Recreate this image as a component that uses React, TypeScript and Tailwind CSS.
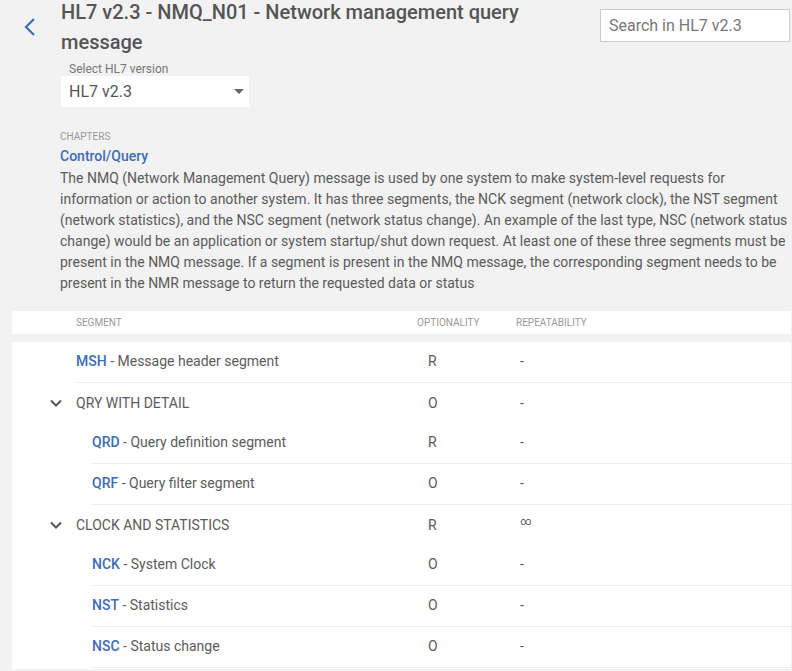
import React from "react";

type Row =
  | { kind: "seg"; code: string; name: string; opt: string; rep: string; depth: number }
  | { kind: "group"; name: string; opt: string; rep: string };

const rows: Row[] = [
  { kind: "seg", code: "MSH", name: "Message header segment", opt: "R", rep: "-", depth: 0 },
  { kind: "group", name: "QRY WITH DETAIL", opt: "O", rep: "-" },
  { kind: "seg", code: "QRD", name: "Query definition segment", opt: "R", rep: "-", depth: 1 },
  { kind: "seg", code: "QRF", name: "Query filter segment", opt: "O", rep: "-", depth: 1 },
  { kind: "group", name: "CLOCK AND STATISTICS", opt: "R", rep: "∞" },
  { kind: "seg", code: "NCK", name: "System Clock", opt: "O", rep: "-", depth: 1 },
  { kind: "seg", code: "NST", name: "Statistics", opt: "O", rep: "-", depth: 1 },
  { kind: "seg", code: "NSC", name: "Status change", opt: "O", rep: "-", depth: 1 },
];

function Cols({ opt, rep }: { opt: string; rep: string }) {
  return (
    <>
      <div className="w-[92px] shrink-0">{opt}</div>
      <div className={`w-[271px] shrink-0 ${rep === "∞" ? "text-[11px] -mt-[5px]" : ""}`}>{rep}</div>
    </>
  );
}

export default function App() {
  return (
    <div
      className="min-h-[671px] w-[792px] bg-[#f2f2f2] text-[#5b5b5b]"
      style={{ fontFamily: "Roboto, 'Liberation Sans', sans-serif" }}
    >
      <div className="flex">
        <div className="w-[61px] shrink-0 pt-[17px] pl-[23px]">
          <svg width="14" height="20" viewBox="0 0 14 20" fill="none">
            <path d="M11 2 L3 10 L11 18" stroke="#3d6db4" strokeWidth="2.2" />
          </svg>
        </div>
        <div className="w-[530px] shrink-0">
          <h1 className="-mt-[3px] text-[20px] leading-[30px] font-medium text-[#555]">
            HL7 v2.3 - NMQ_N01 - Network management query message
          </h1>
          <div className="mt-[5px] pl-[8px] text-[12px] leading-[14px] text-[#777]">Select HL7 version</div>
          <div className="flex h-[31px] w-[188px] items-center justify-between bg-white pl-[8px] pr-[5px] text-[16px] text-[#555]">
            <span>HL7 v2.3</span>
            <svg width="10" height="5" viewBox="0 0 10 5">
              <path d="M0 0 L10 0 L5 5 Z" fill="#666" />
            </svg>
          </div>
        </div>
        <div className="ml-auto mr-[2px] mt-[9px] flex h-[33px] w-[190px] items-center border border-[#cccccc] bg-white px-[8px] text-[16px] text-[#777]">
          Search in HL7 v2.3
        </div>
      </div>

      <div className="ml-[60px] mt-[24px] w-[731px]">
        <div className="text-[10px] leading-[12px] text-[#999]">CHAPTERS</div>
        <div className="mt-[3px] text-[14px] leading-[20px] font-medium text-[#3d6db4]">Control/Query</div>
        <p className="mt-[2px] text-[14px] leading-[21px] text-[#5b5b5b]">
          The NMQ (Network Management Query) message is used by one system to make system-level requests for
          information or action to another system. It has three segments, the NCK segment (network clock), the NST
          segment (network statistics), and the NSC segment (network status change). An example of the last type, NSC
          (network status change) would be an application or system startup/shut down request. At least one of these
          three segments must be present in the NMQ message. If a segment is present in the NMQ message, the
          corresponding segment needs to be present in the NMR message to return the requested data or status
        </p>
      </div>

      <div className="ml-[12px] mt-[17px] w-[779px]">
        <div className="flex h-[23px] items-center bg-white pl-[64px] text-[10px] text-[#999]">
          <div className="flex-1">SEGMENT</div>
          <div className="w-[99px] shrink-0">OPTIONALITY</div>
          <div className="w-[275px] shrink-0">REPEATABILITY</div>
        </div>

        <div className="mt-[8px] bg-white pb-[1px] text-[14px]">
          {rows.map((r, i) =>
            r.kind === "group" ? (
              <div key={i} className="flex h-[40px] items-center">
                <div className="w-[64px] shrink-0 pl-[38px]">
                  <svg width="12" height="8" viewBox="0 0 12 8" fill="none">
                    <path d="M1 1.5 L6 6.5 L11 1.5" stroke="#555" strokeWidth="2" />
                  </svg>
                </div>
                <div className="flex-1 text-[#5b5b5b]">{r.name}</div>
                <Cols opt={r.opt} rep={r.rep} />
              </div>
            ) : (
              <div key={i} className={`flex ${r.depth ? "pl-[80px]" : "pl-[64px]"}`}>
                <div className="flex h-[41px] flex-1 items-center border-b border-[#eeeeee] pb-[1px]">
                  <div className="flex-1">
                    <span className="font-medium text-[#3d6db4]">{r.code}</span>
                    <span> - {r.name}</span>
                  </div>
                  <Cols opt={r.opt} rep={r.rep} />
                </div>
              </div>
            )
          )}
        </div>
      </div>
    </div>
  );
}
